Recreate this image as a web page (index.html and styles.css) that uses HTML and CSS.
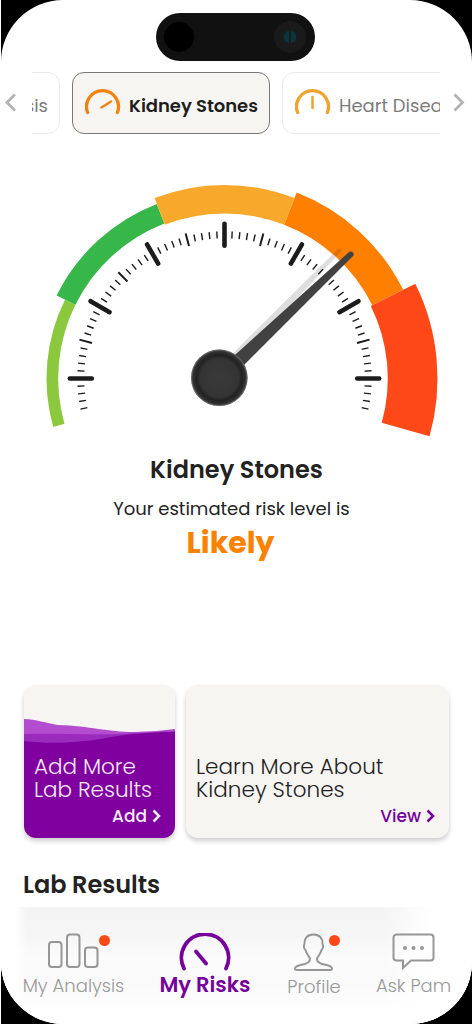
FILE: index.html
```html
<!DOCTYPE html>
<html lang="en">
<head>
<meta charset="utf-8">
<title>My Risks</title>
<link rel="stylesheet" href="styles.css">
</head>
<body>
<div class="phone">
  <header class="status">
    <div class="island"><span class="sensor"></span><span class="camera"><i></i><i></i></span></div>
  </header>

  <div class="tabs">
    <svg class="arrow" viewBox="0 0 12 20"><path d="M10 1.500 2 9.500l8 8"/></svg>
    <div class="strip">
      <div class="tab tab-prev"><span>sis</span></div>
      <div class="tab tab-active">
        <svg class="dial" viewBox="0 0 36 26"><path d="M2.600 23.500A16 16 0 1 1 32.400 23.500"/><path class="hand" d="m16.500 18.500 9.500-6"/></svg>
        <span>Kidney Stones</span>
      </div>
      <div class="tab tab-next">
        <svg class="dial" viewBox="0 0 36 26"><path d="M2.600 23.500A16 16 0 1 1 32.400 23.500"/><path class="hand" d="M17.500 8v11"/></svg>
        <span>Heart Disease</span>
      </div>
    </div>
    <svg class="arrow" viewBox="0 0 12 20"><path d="m1.500 1.500 8 8-8 8"/></svg>
  </div>

  <main>
    <svg class="gauge" viewBox="0 0 472 280">
      <defs>
        <radialGradient id="hub"><stop offset="0" stop-color="#3a3a3a"/><stop offset=".68" stop-color="#343434"/><stop offset=".8" stop-color="#222"/><stop offset=".92" stop-color="#303030"/><stop offset="1" stop-color="#555"/></radialGradient>
      </defs>
      <g id="bands"></g>
      <g id="ticks"></g>
      <path d="m222 194 116-115q3-1 3.500 2L230 200z" fill="#000" opacity=".13"/>
      <path d="M231 188.500 348.500 82.500q3-2 4.500 0 1.500 2-.5 4L242 197z" fill="#414141"/>
      <circle cx="219.300" cy="207.800" r="28.300" fill="url(#hub)"/>
      <circle cx="219.300" cy="207.800" r="27.800" fill="none" stroke="#777" stroke-width="1" opacity=".6"/>
    </svg>
    <section class="result">
      <h1>Kidney Stones</h1>
      <p>Your estimated risk level is</p>
      <strong>Likely</strong>
    </section>
    <section class="cards">
      <article class="card card-add">
        <svg class="wave" viewBox="0 0 151 153" preserveAspectRatio="none">
          <path d="M0 34c12 .5 22 4 34 6 32 1 50 7 76 7q20 0 41-3v20H0z" fill="#b44cd0"/>
          <path d="M0 49c25-1 65 1 92 0 20-1 42-2 59-3v20H0z" fill="#9a2bbd"/>
          <path d="M0 56c24 3 52 2 77-2 25-5 48-7 74-7v106H0z" fill="#7f009f"/>
        </svg>
        <h2>Add More<br>Lab Results</h2>
        <div class="action"><span>Add</span><svg viewBox="0 0 9 14"><path d="m1.500 1.500 5.500 5.500-5.500 5.500"/></svg></div>
      </article>
      <article class="card card-learn">
        <h2>Learn More About<br>Kidney Stones</h2>
        <div class="action"><span>View</span><svg viewBox="0 0 9 14"><path d="m1.500 1.500 5.500 5.500-5.500 5.500"/></svg></div>
      </article>
    </section>
    <h3>Lab Results</h3>
  </main>

  <nav class="nav">
    <a class="item item-analysis">
      <svg viewBox="0 0 52 36"><rect x="1" y="9" width="12.500" height="25" rx="3"/><rect x="19" y="1.500" width="12.500" height="32.500" rx="3"/><rect x="37" y="14.500" width="12.500" height="19.500" rx="3"/></svg>
      <span>My Analysis</span><b class="dot"></b>
    </a>
    <a class="item item-risks">
      <svg viewBox="0 0 52 38"><path d="M5 35.500A23.600 23.600 0 1 1 47 35.500"/><path d="M17 18.500 27 30.500"/></svg>
      <span>My Risks</span>
    </a>
    <a class="item item-profile">
      <svg viewBox="0 0 42 38"><path d="M20.500 1.500c-6.500 0-9.500 4.500-9 9.500-1.500 2-.3 5 1 6 1 4.200 3 5.500 4.500 8.500 0 3-2 4.500-5 5.500-4 1-10 1.500-10 4.500 0 1.200.8 1.500 2 1.500h33c1.200 0 2-.3 2-1.500 0-3-6-3.500-10-4.500-3-1-5-2.500-5-5.500 1.500-3 3.500-4.300 4.500-8.500 1.300-1 2.500-4 1-6 .5-5-2.500-9.500-9-9.500z"/></svg>
      <span>Profile</span><b class="dot"></b>
    </a>
    <a class="item item-ask">
      <svg viewBox="0 0 44 38"><path d="M4.500 1.500h34a3 3 0 0 1 3 3v20a3 3 0 0 1-3 3H19l-8 7.500v-7.500H4.500a3 3 0 0 1-3-3v-20a3 3 0 0 1 3-3z"/><g class="pips"><circle cx="13" cy="15" r="2"/><circle cx="21.500" cy="15" r="2"/><circle cx="30" cy="15" r="2"/></g></svg>
      <span>Ask Pam</span>
    </a>
  </nav>
</div>
<script src="gauge.js"></script>
</body>
</html>
```
FILE: styles.css
```css
* { box-sizing: border-box; }
body { margin: 0; background: #000; font-family: Poppins, Inter, Roboto, sans-serif; color: #222; border-left: 1px solid #fff; }
.phone { position: relative; height: 1024px; background: #fff; border-radius: 62px; overflow: hidden; display: flex; flex-direction: column; }
svg { display: block; fill: none; flex: none; }
h1, h2, h3, p { margin: 0; white-space: nowrap; }
span { white-space: nowrap; }

.status { height: 72px; padding: 12.500px 0 0 155px; }
.island { width: 159px; height: 48px; border-radius: 24px; background: #111; display: flex; align-items: center; justify-content: space-between; padding: 0 9px 0 8px; }
.sensor { width: 30px; height: 30px; border-radius: 50%; background: #000; }
.camera { width: 32px; height: 32px; border-radius: 50%; background: #1a1a1b; display: flex; align-items: center; justify-content: center; gap: 2px; }
.camera i { width: 5px; height: 12px; background: #0c3440; border-radius: 6px 0 0 6px; }
.camera i + i { border-radius: 0 6px 6px 0; }

.tabs { display: flex; height: 62px; align-items: center; padding-left: 4px; }
.arrow { width: 12px; height: 20px; stroke: #b3b3b3; stroke-width: 2.800; }
.strip { width: 408px; height: 62px; margin: 0 13px 0 15px; display: flex; gap: 12px; overflow: hidden; }
.tab { flex: none; height: 62px; border: 1px solid #e9e9e9; border-radius: 12px; display: flex; align-items: center; gap: 8px; padding: 4px 12px 0; font-size: 18px; color: #7c7c7c; }
.tab-prev { width: 60px; margin-left: -32px; justify-content: flex-end; padding-right: 11px; }
.tab-active { width: 198px; border-color: #777; background: #f7f5f2; color: #1e1e1e; font-weight: 600; letter-spacing: -.05px; }
.tab-next { width: 190px; }
.dial { width: 36px; height: 26px; margin-top: -6px; stroke: #f08210; stroke-width: 3.300; stroke-linecap: round; }
.dial .hand { stroke-width: 2.500; }
.tab-next .dial { stroke: #f0a22d; }

main { display: flex; flex-direction: column; }
.gauge { width: 472px; height: 280px; margin: 36px 0 0 -1px; }
.result { height: 235px; padding-top: 5px; display: flex; flex-direction: column; align-items: center; text-align: center; }
.result h1 { font-size: 24px; font-weight: 600; line-height: 30px; }
.result p { font-size: 18px; line-height: 26px; margin-top: 11px; margin-right: 10px; }
.result strong { font-size: 30px; line-height: 36px; font-weight: 700; color: #f98200; margin-top: 3px; margin-right: 12px; }
.cards { display: flex; gap: 11px; padding-left: 23px; height: 153px; }
.card { position: relative; height: 153px; background: #f7f5f2; border-radius: 12px; overflow: hidden; box-shadow: 0 3px 5px #0003; padding: 70px 14px 0 10px; }
.card-add { width: 151px; color: #f7e9fa; }
.card-learn { width: 263px; }
.wave { position: absolute; left: 0; top: 0; width: 151px; height: 153px; }
.card h2 { position: relative; font-size: 21.500px; line-height: 23px; font-weight: 300; }
.action { position: relative; display: flex; justify-content: flex-end; align-items: center; gap: 5px; font-size: 17px; font-weight: 500; line-height: 22px; margin-top: 4px; }
.action svg { width: 9px; height: 14px; stroke: currentColor; stroke-width: 2.500; }
.card-learn .action { color: #75009a; }
.card-learn h2 { letter-spacing: .05px; }
h3 { margin: 32px 0 0 22px; font-size: 24px; line-height: 30px; font-weight: 600; letter-spacing: -.05px; }

.nav { position: absolute; left: 0; right: 0; bottom: 0; height: 117px; display: flex; padding: 26px 0 0 21px; background: linear-gradient(90deg, #fff 14px, #fff0 26px, #fff0 380px, #fff 430px), linear-gradient(#f3f3f3, #f6f6f6 30px, #fbfbfb 52px, #f9f9f9 75px, #fff 104px); }
.item { position: relative; display: flex; flex-direction: column; align-items: center; color: #999; font-size: 18px; font-weight: 300; line-height: 24px; }
.item svg { stroke: #969696; stroke-width: 2; }
.item-analysis { width: 103px; }
.item-analysis svg { width: 52px; height: 36px; }
.item-analysis span { margin-top: 5px; }
.item-risks { width: 92px; margin-left: 34px; color: #75009a; font-size: 21px; font-weight: 600; }
.item-risks svg { width: 52px; height: 38px; stroke: #75009a; stroke-width: 3.800; stroke-linecap: round; }
.item-risks span { margin-top: 2px; }
.item-profile { width: 54px; margin-left: 36px; }
.item-profile svg { width: 42px; height: 38px; }
.item-profile span { margin-top: 4px; }
.item-ask { width: 75px; margin-left: 35px; }
.item-ask svg { width: 44px; height: 38px; }
.item-ask span { margin-top: 3px; }
.item-ask .pips { fill: #969696; stroke: none; }
.dot { position: absolute; top: 2px; right: 15px; width: 11px; height: 11px; border-radius: 50%; background: #ff4818; }
.item-profile .dot { right: 1px; }
```
FILE: gauge.js
```
const NS = "http://www.w3.org/2000/svg";
const CX = 224.5, CY = 208.5;
const point = (r, deg) => {
  const a = deg * Math.PI / 180;
  return `${(CX - r * Math.cos(a)).toFixed(2)} ${(CY - r * Math.sin(a)).toFixed(2)}`;
};
const add = (parent, attrs) => {
  const el = document.createElementNS(NS, "path");
  for (const key in attrs) el.setAttribute(key, attrs[key]);
  document.getElementById(parent).appendChild(el);
};

// start angle, end angle, inner radius, outer radius, fill
[
  [-15.8, 26.3, 166.3, 178, "#8cc83e"],
  [26.3, 68.8, 166.3, 187.3, "#37b649"],
  [68.8, 111.2, 165, 193.5, "#f8a92b"],
  [111.2, 153.6, 165, 199.5, "#ff8000"],
  [153.6, 195.7, 163.3, 213, "#ff4818"]
].forEach(([a, b, inner, outer, fill]) => add("bands", {
  fill,
  d: `M${point(outer, a)}A${outer} ${outer} 0 0 1 ${point(outer, b)}L${point(inner, b)}A${inner} ${inner} 0 0 0 ${point(inner, a)}Z`
}));

for (let deg = -12; deg <= 192; deg += 3) {
  const major = deg % 30 === 0, medium = deg % 15 === 0;
  const half = major ? 11 : medium ? 6.5 : 3.5;
  add("ticks", {
    d: `M${point(143.7 - half, deg)}L${point(143.7 + half, deg)}`,
    stroke: "#1b1b1b",
    "stroke-width": major ? 4.6 : medium ? 2 : 1.4,
    "stroke-linecap": major ? "round" : "butt"
  });
}
```
